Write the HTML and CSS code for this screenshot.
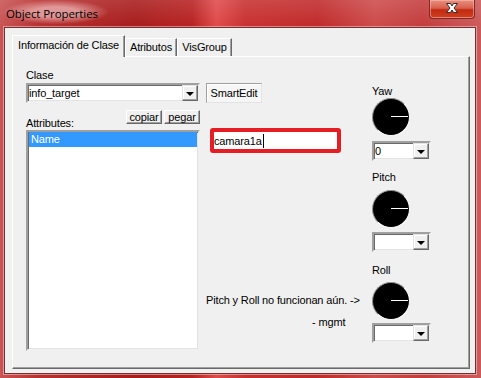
FILE: index.html
```html
<!DOCTYPE html>
<html>
	<head>
		<link rel="stylesheet" href="styles.css">
	</head>
	<body>
		<div class="window">
			<div class="titlebar">
				<span class="title">Object Properties</span>
				<div class="close">
					<svg viewBox="0 0 46 19" width="46" height="19">
						<path d="M17.5 4.5h4l1.5 2.5 1.5-2.5h4l-3.5 4.5 3.5 4.5h-4l-1.5-2.5-1.5 2.5h-4l3.5-4.5z" fill="#fff" stroke="#3a2a2a" stroke-width="1" stroke-linejoin="round"/>
					</svg>
				</div>
			</div>
			<div class="client">
				<div class="tabs">
					<div class="tab active">Información de Clase</div>
					<div class="tab tab-attr">Atributos</div>
					<div class="tab tab-vis">VisGroup</div>
				</div>
				<div class="panel">
					<div class="col-left">
						<div class="label">Clase</div>
						<div class="combo combo-class">
							<span class="combo-text">info_target</span>
							<span class="drop"></span>
						</div>
						<div class="attr-row">
							<span class="label">Attributes:</span>
							<div class="btn-pair">
								<button class="btn">copiar</button>
								<button class="btn">pegar</button>
							</div>
						</div>
						<div class="listbox">
							<div class="row selected">Name</div>
						</div>
					</div>
					<div class="col-mid">
						<button class="smartedit">SmartEdit</button>
						<div class="value-box">camara1a<span class="caret"></span></div>
						<div class="note">Pitch y Roll no funcionan aún. -&gt;</div>
						<div class="note sign">- mgmt</div>
					</div>
					<div class="col-right">
						<div class="label yaw-label">Yaw</div>
						<div class="dial"></div>
						<div class="combo combo-small yaw-combo">
							<span class="combo-text">0</span>
							<span class="drop"></span>
						</div>
						<div class="label pitch-label">Pitch</div>
						<div class="dial pitch-dial"></div>
						<div class="combo combo-small pitch-combo">
							<span class="combo-text"></span>
							<span class="drop"></span>
						</div>
						<div class="label roll-label">Roll</div>
						<div class="dial roll-dial"></div>
						<div class="combo combo-small roll-combo">
							<span class="combo-text"></span>
							<span class="drop"></span>
						</div>
					</div>
				</div>
			</div>
		</div>
	</body>
</html>
```

FILE: styles.css
```css
* {
	box-sizing: border-box;
}
body {
	margin: 0;
	font-family: "Liberation Sans", Arial, sans-serif;
	font-size: 11px;
	letter-spacing: -0.15px;
	color: #000;
}
.window {
	width: 481px;
	height: 378px;
	padding: 0 5px 4px 4px;
	display: flex;
	flex-direction: column;
	background:
		linear-gradient(180deg, rgba(255, 255, 255, 0.12) 0, rgba(255, 255, 255, 0) 27px),
		linear-gradient(90deg, #c85454 0%, #b83030 8%, #a81c1c 28%, #b82222 40%, #e04a4a 45%, #c83030 51%, #c02a2a 66%, #cd4a4a 78%, #c43c3c 88%, #cc5a5a 100%);
}
.titlebar {
	height: 27px;
	display: flex;
	justify-content: space-between;
	align-items: flex-start;
}
.title {
	font-family: "Open Sans", "Liberation Sans", sans-serif;
	font-size: 11.5px;
	letter-spacing: -0.1px;
	padding: 6px 10px 3px 2px;
	line-height: 15px;
	background: radial-gradient(ellipse at center, rgba(255, 225, 225, 0.55) 30%, rgba(255, 225, 225, 0) 72%);
}
.close {
	width: 46px;
	height: 19px;
	margin-right: 1px;
	border: 1px solid #7a2a2a;
	border-top: none;
	border-radius: 0 0 4px 4px;
	background: linear-gradient(180deg, #e89080 0%, #d8604c 45%, #c22a10 55%, #d04020 100%);
	box-shadow: inset 0 0 0 1px rgba(255, 200, 190, 0.5);
}
.close svg {
	display: block;
	margin: -1px 0 0 -1px;
}
.client {
	flex: 1;
	background: #f0f0f0;
	border: 1px solid #6e3030;
	box-shadow: 0 0 0 1px rgba(255, 220, 220, 0.5);
	padding: 7px 0 0 7px;
}
.tabs {
	display: flex;
	align-items: flex-end;
	height: 21px;
	position: relative;
	z-index: 1;
}
.tab {
	height: 18px;
	line-height: 17px;
	text-align: center;
	border: 1px solid #fff;
	border-bottom: none;
	border-right-color: #696969;
	box-shadow: inset -1px 0 0 #a0a0a0;
	background: #f0f0f0;
}
.tab.active {
	width: 113px;
	height: 22px;
	line-height: 19px;
	margin-bottom: -1px;
}
.tab-attr {
	width: 52px;
}
.tab-vis {
	width: 55px;
}
.panel {
	width: 458px;
	height: 313px;
	border: 1px solid #fff;
	border-right-color: #696969;
	border-bottom-color: #696969;
	box-shadow: inset -1px -1px 0 #a0a0a0;
	padding: 12px 0 0 13px;
	display: flex;
}
.label {
	line-height: 13px;
	height: 13px;
}
.col-left {
	width: 174px;
	display: flex;
	flex-direction: column;
}
.combo {
	height: 20px;
	display: flex;
	background: #fff;
	border: 2px solid;
	border-color: #a0a0a0 #f0f0f0 #f0f0f0 #a0a0a0;
	box-shadow: inset 1px 1px 0 #696969, inset -1px -1px 0 #e3e3e3;
}
.combo-class {
	margin-top: 1px;
}
.combo-text {
	flex: 1;
	line-height: 16px;
	padding-left: 1px;
}
.drop {
	width: 16px;
	height: 16px;
	background: #f0f0f0;
	border: 1px solid;
	border-color: #e3e3e3 #696969 #696969 #e3e3e3;
	box-shadow: inset -1px -1px 0 #a0a0a0, inset 1px 1px 0 #fff;
	display: flex;
	justify-content: center;
	align-items: center;
}
.drop::before {
	content: "";
	border-left: 4px solid transparent;
	border-right: 4px solid transparent;
	border-top: 4px solid #000;
	margin-top: 1px;
}
.attr-row {
	height: 27px;
	display: flex;
	justify-content: space-between;
	align-items: flex-end;
}
.btn-pair {
	display: flex;
	gap: 2px;
	align-self: flex-start;
	margin-top: 7px;
}
.btn {
	width: 36px;
	height: 14px;
	padding: 0;
	font-family: inherit;
	font-size: 11px;
	letter-spacing: -0.15px;
	line-height: 12px;
	color: #000;
	background: #f0f0f0;
	border: 1px solid;
	border-color: #fff #696969 #696969 #fff;
	box-shadow: inset -1px -1px 0 #a0a0a0;
}
.listbox {
	height: 221px;
	background: #fff;
	border: 2px solid;
	border-color: #a0a0a0 #f0f0f0 #f0f0f0 #a0a0a0;
	box-shadow: inset 1px 1px 0 #696969, inset -1px -1px 0 #e3e3e3;
	padding: 0 1px 0 1px;
}
.row {
	height: 15px;
	line-height: 15px;
	padding-left: 2px;
}
.row.selected {
	background: #3399ff;
	color: #fff;
}
.col-mid {
	width: 160px;
	margin-left: 6px;
	display: flex;
	flex-direction: column;
	align-items: flex-start;
}
.smartedit {
	margin-top: 14px;
	width: 56px;
	height: 20px;
	padding: 0;
	font-family: inherit;
	font-size: 11px;
	letter-spacing: -0.15px;
	color: #000;
	background: #f6f6f6;
	border: 1px solid;
	border-color: #a0a0a0 #e3e3e3 #e3e3e3 #a0a0a0;
	box-shadow: inset 1px 1px 0 #fff;
}
.value-box {
	margin: 25px 0 0 4px;
	width: 131px;
	height: 25px;
	border: 4px solid #e61d25;
	border-radius: 3px;
	background: #fff;
	line-height: 17px;
	padding-top: 1px;
	display: flex;
	align-items: center;
}
.caret {
	width: 1px;
	height: 14px;
	background: #000;
	margin-left: 1px;
}
.note {
	margin-top: 141px;
	line-height: 13px;
}
.note.sign {
	margin-top: 9px;
	padding-left: 106px;
}
.col-right {
	width: 59px;
	margin-left: 6px;
	display: flex;
	flex-direction: column;
}
.yaw-label {
	margin-top: 16px;
}
.dial {
	width: 38px;
	height: 38px;
	border-radius: 50%;
	background: #000;
	border: 1px solid;
	border-color: #909090 #ffffff #ffffff #909090;
	position: relative;
}
.dial::after {
	content: "";
	position: absolute;
	left: 18px;
	top: 17px;
	width: 17px;
	height: 1px;
	background: #fff;
}
.combo-small {
	width: 59px;
	margin-top: 5px;
}
.pitch-label {
	margin-top: 10px;
}
.pitch-dial {
	margin-top: 6px;
}
.pitch-combo {
	margin-top: 4px;
}
.roll-label {
	margin-top: 12px;
}
.roll-dial {
	margin-top: 5px;
}
.roll-combo {
	margin-top: 3px;
}
```
